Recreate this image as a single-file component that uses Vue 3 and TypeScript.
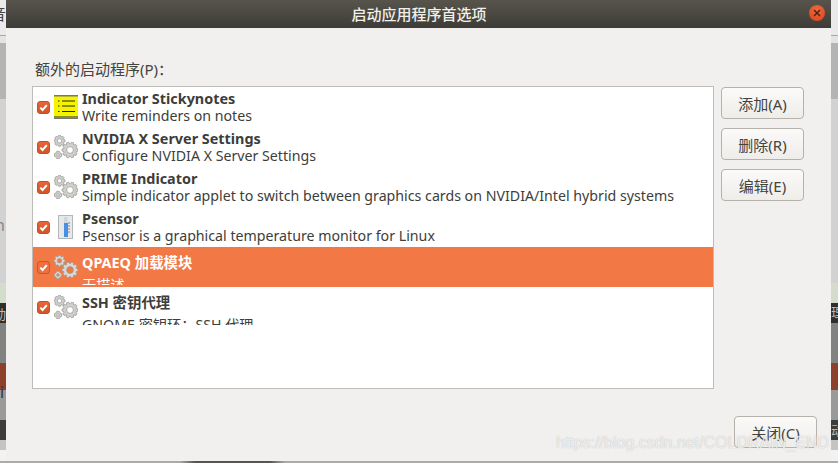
<script setup lang="ts">
type Row = {
  icon: 'note' | 'gears' | 'thermo'
  name: string
  desc: string
  selected?: boolean
  tall?: boolean
}

const rows: Row[] = [
  { icon: 'note', name: 'Indicator Stickynotes', desc: 'Write reminders on notes' },
  { icon: 'gears', name: 'NVIDIA X Server Settings', desc: 'Configure NVIDIA X Server Settings' },
  { icon: 'gears', name: 'PRIME Indicator', desc: 'Simple indicator applet to switch between graphics cards on NVIDIA/Intel hybrid systems' },
  { icon: 'thermo', name: 'Psensor', desc: 'Psensor is a graphical temperature monitor for Linux' },
  { icon: 'gears', name: 'QPAEQ 加载模块', desc: '无描述', selected: true, tall: true },
  { icon: 'gears', name: 'SSH 密钥代理', desc: 'GNOME 密钥环：SSH 代理', tall: true },
]

const actions = ['添加(A)', '删除(R)', '编辑(E)']
const ticks = [8, 11, 14, 17]

const bands = [
  { h: 35, c: '#eaeaea' },
  { h: 1, c: '#a8a8a8' },
  { h: 7, c: '#e4e4e4' },
  { h: 56, c: '#b4b4b4' },
  { h: 184, c: '#d2d2d2' },
  { h: 20, c: '#d4dccb' },
  { h: 20, c: '#2e2e2c' },
  { h: 40, c: '#828282' },
  { h: 27, c: '#8e412a' },
  { h: 30, c: '#9a9a9a' },
  { h: 20, c: '#3c3c38' },
  { h: 10, c: '#c4c4c4' },
  { h: 13, c: '#f2f2f2' },
]

// toothed outline for the little gear icons
function gear(cx: number, cy: number, outer: number, inner: number, teeth: number) {
  const pts: string[] = []
  const step = (Math.PI * 2) / teeth
  for (let i = 0; i < teeth; i++) {
    const a = i * step
    const corners: [number, number][] = [
      [a - step * 0.46, inner],
      [a - step * 0.2, outer],
      [a + step * 0.2, outer],
      [a + step * 0.46, inner],
    ]
    for (const [ang, r] of corners)
      pts.push(`${(cx + Math.cos(ang) * r).toFixed(2)} ${(cy + Math.sin(ang) * r).toFixed(2)}`)
  }
  return 'M' + pts.join('L') + 'Z'
}

const gears = [
  { d: gear(5.5, 5.8, 5.6, 4.3, 8), x: 5.5, y: 5.8, hole: 2.2 },
  { d: gear(16, 15, 8, 6.2, 10), x: 16, y: 15, hole: 3.4 },
  { d: gear(4, 20, 3.9, 2.9, 4), x: 4, y: 20, hole: 1.3 },
]
</script>

<template>
  <div class="screen">
    <div class="desktop">
      <div v-for="(b, i) in bands" :key="i" :style="{ height: b.h + 'px', background: b.c }"></div>
      <span class="peek left-a">音</span>
      <span class="peek left-b">n</span>
      <span class="peek left-c small light">动</span>
      <span class="peek left-d">i</span>
      <span class="peek right-a small light">理</span>
      <span class="peek right-b small light">动</span>
      <span class="floor"></span>
    </div>

    <div class="dialog">
      <header class="titlebar">
        <span class="title">启动应用程序首选项</span>
        <span class="close-dot">
          <svg width="8" height="8" viewBox="0 0 8 8">
            <path d="M1 1L7 7M7 1L1 7" stroke="#4a2418" stroke-width="1.5" />
          </svg>
        </span>
      </header>

      <div class="body">
        <div class="list-label">额外的启动程序(P)：</div>

        <div class="main">
          <div class="list">
            <div v-for="row in rows" :key="row.name" class="row" :class="{ selected: row.selected, tall: row.tall }">
              <span class="check">
                <svg width="9" height="9" viewBox="0 0 10 10">
                  <path d="M1.500 5.200L4 7.800L8.600 2.400" fill="none" stroke="#fff" stroke-width="2.200" />
                </svg>
              </span>

              <svg v-if="row.icon === 'note'" class="icon" width="24" height="24" viewBox="0 0 24 24">
                <rect x="0" y="0" width="24" height="24" fill="#77776a" />
                <rect x="0" y="1.500" width="24" height="19.500" fill="#f4f400" />
                <rect x="0" y="21" width="24" height="2" fill="#8e8e2a" />
                <path d="M8 6H21M8 11H21M8 16.500H21" stroke="#26260a" stroke-width="1.200" />
                <path d="M4 6H5.500M4 11H5.500M4 16.500H5.500" stroke="#26260a" stroke-width="1.200" />
              </svg>

              <svg v-else-if="row.icon === 'gears'" class="icon" width="24" height="24" viewBox="0 0 24 24">
                <g v-for="g in gears" :key="g.x + g.y">
                  <path :d="g.d" :fill="row.selected ? '#dcd9d5' : '#cfcfcc'" stroke="#9c9c98" stroke-width="0.800" />
                  <circle :cx="g.x" :cy="g.y" :r="g.hole" :fill="row.selected ? '#f27945' : '#fff'" stroke="#9c9c98" stroke-width="0.800" />
                </g>
              </svg>

              <svg v-else class="icon" width="24" height="24" viewBox="0 0 24 24">
                <rect x="4.500" y="0.500" width="14" height="23" fill="#e6e9ec" stroke="#b4b6b8" />
                <rect x="10" y="2" width="3.500" height="20" fill="#cfd8e2" />
                <rect x="10" y="8" width="4" height="14" fill="#4a90e0" />
                <path v-for="t in ticks" :key="t" :d="`M14 ${t}H16`" stroke="#7a8696" stroke-width="1" />
              </svg>

              <div class="texts">
                <div class="name">{{ row.name }}</div>
                <div class="desc">{{ row.desc }}</div>
              </div>
            </div>
          </div>

          <div class="actions">
            <button v-for="a in actions" :key="a" class="btn">{{ a }}</button>
          </div>
        </div>

        <div class="footer">
          <button class="btn">关闭(C)</button>
        </div>
      </div>
    </div>

    <div class="watermark">https://blog.csdn.net/COLDRAIN_END</div>
  </div>
</template>

<style scoped>
.screen {
  position: relative;
  width: 838px;
  height: 463px;
  overflow: hidden;
  padding-left: 6px;
  box-sizing: border-box;
  font-family: "Noto Sans", "Noto Sans CJK SC", sans-serif;
}

.desktop {
  position: absolute;
  inset: 0;
}

.peek {
  position: absolute;
  color: #555;
  font-size: 16px;
  line-height: 16px;
}
.small { font-size: 13px; }
.light { color: #bbb; }
.left-a { left: -10px; top: 6px; color: #444; }
.left-b { left: -5px; top: 217px; color: #888; }
.left-c { left: -7px; top: 306px; }
.left-d { left: 0; top: 384px; color: #333; }
.right-a { left: 831px; top: 304px; }
.right-b { left: 831px; top: 422px; }

.floor {
  position: absolute;
  left: 0;
  right: 0;
  bottom: 0;
  height: 2px;
  background: linear-gradient(90deg, #aaa 180px, #555 195px, #555 270px, #aaa 285px);
}

.dialog {
  position: relative;
  width: 825px;
  height: 461px;
  display: flex;
  flex-direction: column;
  background: #f1f0ee;
}

.titlebar {
  position: relative;
  height: 28px;
  flex: none;
  display: flex;
  align-items: center;
  justify-content: center;
  background: linear-gradient(#57544c, #3e3c37);
}

.title {
  color: #f2f0ea;
  font-size: 15px;
  font-weight: 500;
  margin-top: -2px;
  margin-left: 1px;
}

.close-dot {
  position: absolute;
  right: 6px;
  top: 5px;
  width: 16px;
  height: 16px;
  border-radius: 50%;
  display: flex;
  align-items: center;
  justify-content: center;
  background: radial-gradient(circle at 50% 30%, #f0673a, #d9451c);
}

.body {
  flex: 1;
  min-height: 0;
  display: flex;
  flex-direction: column;
  padding: 30px 14px 13px 26px;
}

.list-label {
  height: 28px;
  padding-left: 3px;
  font-size: 15px;
  line-height: 22px;
  color: #44443f;
}

.main {
  display: flex;
  gap: 7px;
}

.list {
  width: 682px;
  height: 303px;
  box-sizing: border-box;
  background: #fff;
  border: 1px solid #bdbcb8;
}

.row {
  height: 40px;
  display: flex;
  align-items: center;
  color: #3d3d3a;
}
.row.selected {
  background: #f27945;
  color: #fff;
}

.check {
  flex: none;
  width: 13px;
  height: 13px;
  box-sizing: border-box;
  margin-left: 4px;
  border-radius: 3px;
  border: 1px solid #c04f2a;
  display: flex;
  align-items: center;
  justify-content: center;
  background: linear-gradient(#e8663a, #d25426);
}
.selected .check {
  border-color: #c8592f;
  background: #ee7040;
}

.icon {
  flex: none;
  margin-left: 4px;
}

.texts {
  align-self: flex-start;
  margin-left: 4px;
  padding-top: 2px;
  height: 36px;
  overflow: hidden;
  white-space: nowrap;
}

.name {
  font-size: 14.4px;
  font-weight: 700;
  line-height: 20px;
}

.desc {
  font-size: 14.2px;
  line-height: 14px;
}

.tall .name {
  line-height: 28px;
}

.tall .desc {
  line-height: 16px;
}

.actions {
  padding-top: 1px;
  display: flex;
  flex-direction: column;
  gap: 9px;
}

.btn {
  width: 83px;
  height: 32px;
  padding: 0;
  box-sizing: border-box;
  border: 1px solid #b5b2ab;
  border-radius: 4px;
  background: linear-gradient(#fbfaf9, #eeedea);
  color: #44443f;
  font-family: inherit;
  font-size: 15px;
}

.footer {
  margin-top: auto;
  display: flex;
  justify-content: flex-end;
}

.watermark {
  position: absolute;
  left: 556px;
  top: 434px;
  font-family: "Liberation Sans", sans-serif;
  font-size: 16px;
  line-height: 18px;
  color: rgba(255, 255, 255, 0.75);
  text-shadow: 0 0 1px rgba(120, 120, 120, 0.55);
}
</style>
